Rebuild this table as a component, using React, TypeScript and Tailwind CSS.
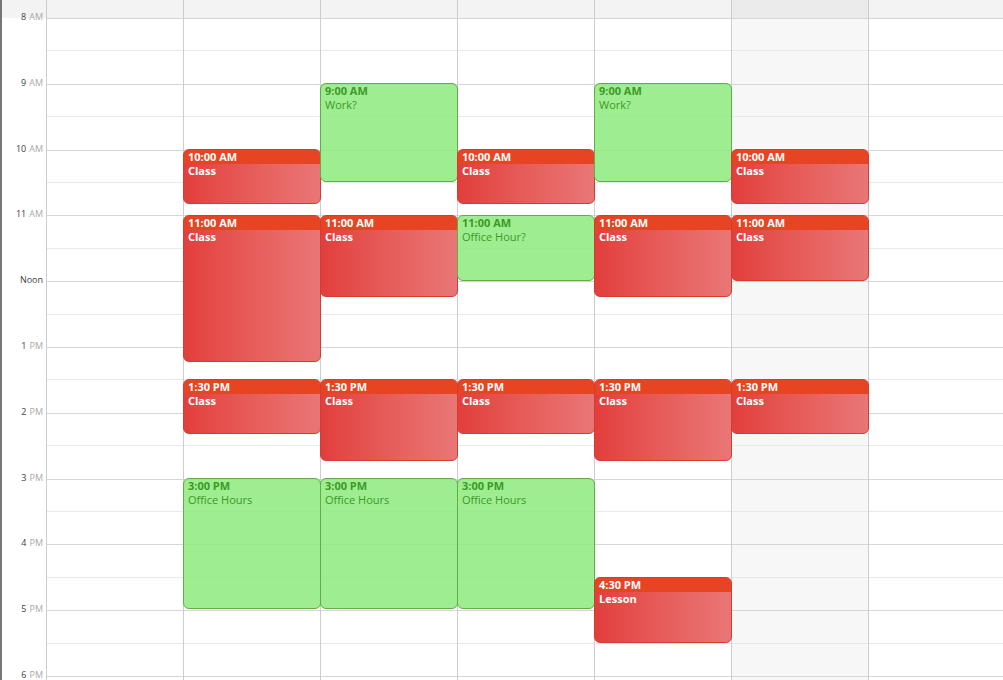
import React from 'react';

type Kind = 'class' | 'free';

interface CalEvent {
  start: number;
  minutes: number;
  kind: Kind;
  time: string;
  title: string;
}

const HOUR = 65.8;
const HOURS = [8, 9, 10, 11, 12, 13, 14, 15, 16, 17, 18];

const label = (h: number) => {
  if (h === 12) return { num: 'Noon', ampm: '' };
  return { num: String(h > 12 ? h - 12 : h), ampm: h >= 12 ? 'PM' : 'AM' };
};

const cls = (start: number, minutes: number, time: string, title = 'Class'): CalEvent => ({
  start,
  minutes,
  kind: 'class',
  time,
  title,
});

const free = (start: number, minutes: number, time: string, title: string): CalEvent => ({
  start,
  minutes,
  kind: 'free',
  time,
  title,
});

const days: CalEvent[][] = [
  [],
  [
    cls(10, 50, '10:00 AM'),
    cls(11, 134, '11:00 AM'),
    cls(13.5, 50, '1:30 PM'),
    free(15, 119, '3:00 PM', 'Office Hours'),
  ],
  [
    free(9, 90, '9:00 AM', 'Work?'),
    cls(11, 75, '11:00 AM'),
    cls(13.5, 75, '1:30 PM'),
    free(15, 119, '3:00 PM', 'Office Hours'),
  ],
  [
    cls(10, 50, '10:00 AM'),
    free(11, 60, '11:00 AM', 'Office Hour?'),
    cls(13.5, 50, '1:30 PM'),
    free(15, 119, '3:00 PM', 'Office Hours'),
  ],
  [
    free(9, 90, '9:00 AM', 'Work?'),
    cls(11, 75, '11:00 AM'),
    cls(13.5, 75, '1:30 PM'),
    cls(16.5, 60, '4:30 PM', 'Lesson'),
  ],
  [
    cls(10, 50, '10:00 AM'),
    cls(11, 60, '11:00 AM'),
    cls(13.5, 50, '1:30 PM'),
  ],
  [],
];

const EventBlock = ({ ev }: { ev: CalEvent }) => {
  // events sit on the hour line, height from duration
  const style = { top: Math.floor((ev.start - 8) * HOUR), height: Math.round((ev.minutes / 60) * HOUR) };

  if (ev.kind === 'free') {
    return (
      <div
        className="absolute left-[-1px] w-[138px] rounded-[6px] border border-[#62ad48] bg-[#8dea7c]/85 px-[4px] text-[11px] leading-[14px] text-[#3c9a26]"
        style={style}
      >
        <div className="font-bold">{ev.time}</div>
        <div>{ev.title}</div>
      </div>
    );
  }

  return (
    <div
      className="absolute left-[-1px] w-[138px] overflow-hidden rounded-[6px] border border-[#d23c31] bg-linear-to-r from-[#e23e3c] to-[#e97676] text-[11px] leading-[14px] text-white"
      style={style}
    >
      <div className="h-[14px] bg-[#e64422] px-[4px] font-bold">{ev.time}</div>
      <div className="px-[4px] font-bold">{ev.title}</div>
    </div>
  );
};

const App = () => {
  return (
    <div className="flex h-[680px] w-[1003px] overflow-hidden border-l-2 border-[#767676] bg-white font-['Open_Sans',sans-serif]">
      {/* Time gutter */}
      <div className="flex w-[44px] shrink-0 flex-col">
        <div className="h-[18px] shrink-0 bg-[#f3f3f3]" />
        {HOURS.map((h) => {
          const l = label(h);
          return (
            <div key={h} className="relative h-[65.8px] shrink-0">
              <div className="absolute right-[3px] top-[-1px] -translate-y-1/2 whitespace-nowrap text-[9px] leading-[12px]">
                <span className="text-[#404040]">{l.num}</span>
                {l.ampm && <span className="ml-[3px] text-[#a9a9a9]">{l.ampm}</span>}
              </div>
            </div>
          );
        })}
      </div>

      {/* Day columns */}
      {days.map((events, i) => {
        const today = i === 5;
        return (
          <div
            key={i}
            className={`flex w-[137px] shrink-0 flex-col border-l border-[#cdcdcd] ${today ? 'bg-[#f7f7f7]' : ''}`}
          >
            <div className={`h-[18px] shrink-0 ${today ? 'bg-[#ebebeb]' : 'bg-[#f3f3f3]'}`} />
            <div className="relative flex flex-col">
              {HOURS.map((h) => (
                <div key={h} className="h-[65.8px] shrink-0 border-t border-[#d6d6d6]">
                  <div className="h-[32.4px] border-b border-[#e9e9e9]" />
                </div>
              ))}
              {events.map((ev, j) => (
                <EventBlock key={j} ev={ev} />
              ))}
            </div>
          </div>
        );
      })}
    </div>
  );
};

export default App;
